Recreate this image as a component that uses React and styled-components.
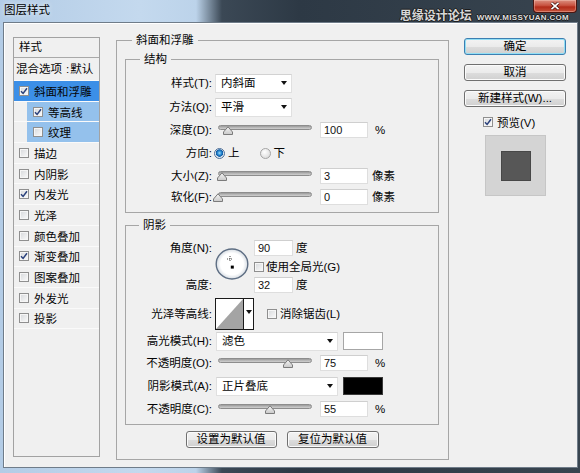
import React from "react";
import styled, { createGlobalStyle } from "styled-components";

const FONT = `"Liberation Sans", "Noto Sans CJK SC", sans-serif`;

const GlobalStyle = createGlobalStyle`
  * { box-sizing: border-box; }
  html, body { margin: 0; padding: 0; }
  body {
    width: 580px; height: 473px; overflow: hidden; background: #2f3b47;
    font-family: ${FONT}; font-size: 11.5px; color: #050505;
  }
`;

/* ---------- window frame ---------- */
const Window = styled.div`
  width: 580px; height: 473px; display: flex; flex-direction: column;
  background: linear-gradient(to right, #b3cce6 0px, #c4d9ee 140px, #bcd3ea 196px, #3b4855 222px, #2d3945 300px, #38444f 100%);
`;
const TitleBar = styled.div`
  height: 22px; flex-shrink: 0; display: flex; align-items: flex-start; padding-left: 4px;
`;
const Title = styled.div`
  line-height: 21px; font-size: 11.5px; color: #000;
  text-shadow: 0 0 5px rgba(255,255,255,.9);
`;
const TitleRight = styled.div`
  margin-left: auto; display: flex; flex-direction: column; align-items: flex-end;
`;
const CloseButton = styled.div`
  width: 44px; height: 13px; margin-right: 3px;
  border: 1px solid #4b1610; border-top: 0; border-radius: 0 0 4px 4px;
  background: linear-gradient(#dc8f80, #c85341 45%, #b22c1a 58%, #c8533b);
  box-shadow: inset 0 0 0 1px rgba(255,220,210,.35);
  display: flex; align-items: center; justify-content: center;
`;
const Watermark = styled.div`
  margin: -4px 11px 0 0; display: flex; align-items: baseline; gap: 5px; line-height: 14px;
`;
const outline = `-1px 0 #1c1c1c, 1px 0 #1c1c1c, 0 -1px #1c1c1c, 0 1px #1c1c1c`;
const WmCn = styled.span`
  font-size: 12px; font-weight: 700; color: #d8d8d8; text-shadow: ${outline};
`;
const WmEn = styled.span`
  font-size: 8px; font-weight: 700; color: #dcdcdc; letter-spacing: .3px; text-shadow: ${outline};
`;
const Client = styled.div`
  flex: 1; margin: 0 2px 5px 3px; background: #f0f0f0;
  border: 1px solid #6f7c89; box-shadow: inset 1px 1px 0 #fff;
  display: flex; align-items: flex-start; padding: 10px 0 0 9px;
`;

/* ---------- left list ---------- */
const StyleList = styled.div`
  width: 87px; height: 420px; margin-top: 4px; flex-shrink: 0;
  border: 1px solid #a2a2a2; background: #f0f0f0;
`;
const ListHeader = styled.div`
  height: 20px; line-height: 19px; padding-left: 5px; border-bottom: 1px solid #a9a9a9;
`;
const BlendRow = styled.div`
  height: 23px; line-height: 22px; padding-left: 2px; border-bottom: 1px solid #fafafa;
  white-space: nowrap;
`;
const Colon = styled.span`
  margin: 0 1px 0 4px;
`;
const ListRow = styled.div`
  height: 20.7px; display: flex; border-bottom: 1px solid #fafafa;
  padding-left: ${p => (p.$sub ? 13 : 0)}px;
`;
const ListCell = styled.div`
  flex: 1; display: flex; align-items: center; gap: 5px;
  padding-left: ${p => (p.$sub ? 6 : 5)}px;
  background: ${p => (p.$sel === "main" ? "#3c8fe7" : p.$sel === "sub" ? "#94c1ec" : "transparent")};
  white-space: nowrap;
`;

/* ---------- controls ---------- */
const CheckBox = styled.span`
  width: 10px; height: 10px; flex-shrink: 0; display: inline-flex; align-items: center; justify-content: center;
  border: 1px solid #8f8f8f; background: linear-gradient(135deg, #d6d8db, #fbfbfb);
  box-shadow: inset 0 0 0 1px #f6f6f6;
`;
function Check({ checked }) {
  return (
    <CheckBox>
      {checked && (
        <svg width="8" height="8" viewBox="0 0 8 8">
          <path d="M1 4.2 L3.1 6.4 L7 1.2" stroke="#2a417c" strokeWidth="1.5" fill="none" />
        </svg>
      )}
    </CheckBox>
  );
}
const CheckLabel = styled.label`
  display: flex; align-items: center; gap: ${p => p.$gap ?? 2}px;
  margin-left: ${p => p.$ml ?? 0}px; white-space: nowrap;
`;
const RadioDot = styled.span`
  width: 11px; height: 11px; border-radius: 50%; flex-shrink: 0;
  border: 1px solid ${p => (p.$on ? "#4f6f97" : "#a4a4a4")};
  background: ${p =>
    p.$on
      ? "radial-gradient(circle at 50% 45%, #9fdcf8 0, #2a8ad3 2px, #0e5aa3 3.4px, #dce6ef 4px, #f6f8fa 100%)"
      : "radial-gradient(circle at 40% 35%, #ffffff, #d3d3d3)"};
`;
const RadioOption = styled.label`
  display: flex; align-items: center; gap: 3px; margin-left: ${p => p.$ml}px;
`;

const Caret = () => (
  <svg width="6" height="4" viewBox="0 0 6 4">
    <path d="M0 0H6L3 4Z" fill="#111" />
  </svg>
);
const Select = styled.div`
  width: ${p => p.$w}px; height: 19px; margin-left: ${p => p.$ml}px; flex-shrink: 0;
  background: #fff; border: 1px solid #e0e0e0; border-top-color: #d2d2d2;
  display: flex; align-items: center; justify-content: space-between;
  padding: 0 4px 0 5px; line-height: 17px;
`;
const Field = styled.input`
  width: ${p => p.$w || 48}px; height: 16px; margin-left: ${p => p.$ml ?? 8}px; flex-shrink: 0;
  border: 1px solid #dedede; border-top-color: #cfcfcf; background: #fff;
  padding: 0 0 0 3px; font: 11px ${FONT}; color: #111; outline: none;
`;
const Unit = styled.span`
  margin-left: ${p => p.$ml ?? 6}px; white-space: nowrap;
`;
const Swatch = styled.div`
  width: 40px; height: 18px; margin-left: 5px; flex-shrink: 0;
  border: 1px solid ${p => (p.$color === "#000" ? "#3a3a3a" : "#a6a6a6")}; background: ${p => p.$color};
`;

const SliderWrap = styled.div`
  position: relative; width: 94px; height: 10px; margin-left: 6px; flex-shrink: 0;
`;
const Track = styled.div`
  height: 5px; border-radius: 3px; border: 1px solid #8d8d8d;
  background: linear-gradient(#9a9a9a, #bdbdbd 60%, #cfcfcf);
`;
const ThumbSvg = styled.svg`
  position: absolute; top: 1px;
`;
function Slider({ at }) {
  return (
    <SliderWrap>
      <Track />
      <ThumbSvg width="10" height="9" viewBox="0 0 10 9" style={{ left: at - 5 }}>
        <defs>
          <linearGradient id="tg" x1="0" y1="0" x2="0" y2="1">
            <stop offset="0" stopColor="#f6f6f6" />
            <stop offset="1" stopColor="#c9c9c9" />
          </linearGradient>
        </defs>
        <path d="M0.5 8.5 V6 L5 0.8 L9.5 6 V8.5 Z" fill="url(#tg)" stroke="#7b7b7b" strokeWidth="1" />
      </ThumbSvg>
    </SliderWrap>
  );
}

/* ---------- groups ---------- */
const Group = styled.fieldset`
  margin: ${p => p.$mt ?? 0}px 0 0 0; min-width: 0;
  border: 1px solid #a6a6a6;
  padding: ${p => p.$pad};
`;
const Legend = styled.legend`
  padding: 0 4px; margin-left: ${p => p.$ml}px; line-height: 14px; font-size: 11.5px;
`;
const MainGroup = styled(Group)`
  width: 333px; height: 427px; margin-left: 16px; flex-shrink: 0;
`;
const Row = styled.div`
  height: ${p => p.$h}px; margin-top: ${p => p.$mt ?? 0}px; display: flex; align-items: center; line-height: 14px;
`;
const Label = styled.span`
  width: 86px; flex-shrink: 0; text-align: right; white-space: nowrap;
`;

const AngleGrid = styled.div`
  display: grid; grid-template-columns: 86px 42px auto; grid-template-rows: 16px 21px 16px;
  line-height: 14px;
`;
const GridLabel = styled.span`
  grid-column: 1; grid-row: ${p => p.$row}; align-self: center; text-align: right; white-space: nowrap;
`;
const Dial = styled.svg`
  grid-column: 2; grid-row: 1 / span 3; align-self: start; margin: 8px 0 0 3px;
`;
const Cell = styled.div`
  grid-column: 3; grid-row: ${p => p.$row}; display: flex; align-items: center;
`;

const ContourSwatch = styled.div`
  width: 39px; height: 32px; margin-left: 3px; flex-shrink: 0;
  border: 1px solid #1a1a1a; display: flex; background: #fff;
`;
const ContourArrow = styled.div`
  flex: 1; border-left: 1px solid #1a1a1a; display: flex; align-items: center; justify-content: center;
  padding-bottom: 3px;
`;

const ButtonRow = styled.div`
  margin-top: 6px; display: flex; justify-content: center; gap: 10px;
`;
const Button = styled.button`
  width: ${p => p.$w}px; height: 17px; padding: 0; flex-shrink: 0;
  border: 1px solid ${p => (p.$default ? "#3c7fb1" : "#707070")}; border-radius: 3px;
  background: linear-gradient(#f3f3f3 0%, #ebebeb 50%, #dddddd 51%, #d0d0d0 100%);
  box-shadow: inset 0 0 0 1px ${p => (p.$default ? "#92dff5" : "#fbfbfb")};
  font: 11.5px ${FONT}; color: #000; line-height: 15px;
`;

/* ---------- right column ---------- */
const SideColumn = styled.div`
  width: 102px; margin: 5px 0 0 15px; display: flex; flex-direction: column; flex-shrink: 0;
  gap: 9px;
`;
const PreviewCheck = styled(CheckLabel)`
  margin: -1px 0 0 19px; height: 14px; gap: 4px;
`;
const PreviewBox = styled.div`
  width: 61px; height: 61px; margin: -3px 0 0 21px;
  background: #d4d4d4; border: 1px solid #c6c6c6;
  display: flex; align-items: center; justify-content: center;
`;
const PreviewSquare = styled.div`
  width: 30px; height: 30px; background: #575757; border: 1px solid #474747;
`;

const effects = [
  { label: "斜面和浮雕", checked: true, sel: "main" },
  { label: "等高线", checked: true, sel: "sub", sub: true },
  { label: "纹理", checked: false, sel: "sub", sub: true },
  { label: "描边" },
  { label: "内阴影" },
  { label: "内发光", checked: true },
  { label: "光泽" },
  { label: "颜色叠加" },
  { label: "渐变叠加", checked: true },
  { label: "图案叠加" },
  { label: "外发光" },
  { label: "投影" },
];

const TRACK_LEFT = 218;

export default function App() {
  return (
    <>
      <GlobalStyle />
      <Window>
        <TitleBar>
          <Title>图层样式</Title>
          <TitleRight>
            <CloseButton>
              <svg width="10" height="8" viewBox="0 0 10 8">
                <path d="M1.5 0.8 L8.5 7.2 M8.5 0.8 L1.5 7.2" stroke="#3a0d08" strokeWidth="3" />
                <path d="M1.5 0.8 L8.5 7.2 M8.5 0.8 L1.5 7.2" stroke="#fff" strokeWidth="1.7" />
              </svg>
            </CloseButton>
            <Watermark>
              <WmCn>思缘设计论坛</WmCn>
              <WmEn>WWW.MISSYUAN.COM</WmEn>
            </Watermark>
          </TitleRight>
        </TitleBar>

        <Client>
          <StyleList>
            <ListHeader>样式</ListHeader>
            <BlendRow>混合选项<Colon>:</Colon>默认</BlendRow>
            {effects.map(e => (
              <ListRow key={e.label} $sub={e.sub}>
                <ListCell $sub={e.sub} $sel={e.sel}>
                  <Check checked={e.checked} />
                  <span>{e.label}</span>
                </ListCell>
              </ListRow>
            ))}
          </StyleList>

          <MainGroup $pad="5px 9px 10px 8px">
            <Legend $ml={7}>斜面和浮雕</Legend>

            <Group $pad="5px 0 5px 0">
              <Legend $ml={14}>结构</Legend>
              <Row $h={24}>
                <Label>样式(T):</Label>
                <Select $w={77} $ml={3}>内斜面<Caret /></Select>
              </Row>
              <Row $h={24}>
                <Label>方法(Q):</Label>
                <Select $w={77} $ml={3}>平滑<Caret /></Select>
              </Row>
              <Row $h={22}>
                <Label>深度(D):</Label>
                <Slider at={227.5 - TRACK_LEFT} />
                <Field readOnly defaultValue="100" />
                <Unit $ml={7}>%</Unit>
              </Row>
              <Row $h={24}>
                <Label>方向:</Label>
                <RadioOption $ml={2}><RadioDot $on />上</RadioOption>
                <RadioOption $ml={20}><RadioDot />下</RadioOption>
              </Row>
              <Row $h={22}>
                <Label>大小(Z):</Label>
                <Slider at={221.5 - TRACK_LEFT} />
                <Field readOnly defaultValue="3" />
                <Unit $ml={4}>像素</Unit>
              </Row>
              <Row $h={20}>
                <Label>软化(F):</Label>
                <Slider at={218 - TRACK_LEFT} />
                <Field readOnly defaultValue="0" />
                <Unit $ml={4}>像素</Unit>
              </Row>
            </Group>

            <Group $mt={5} $pad="8px 0 4px 0">
              <Legend $ml={13}>阴影</Legend>
              <AngleGrid>
                <GridLabel $row={1}>角度(N):</GridLabel>
                <GridLabel $row={3}>高度:</GridLabel>
                <Dial width="34" height="32" viewBox="0 0 34 32">
                  <defs>
                    <radialGradient id="dg" cx="50%" cy="50%" r="50%">
                      <stop offset="0.72" stopColor="#ffffff" />
                      <stop offset="1" stopColor="#d5dbe2" />
                    </radialGradient>
                  </defs>
                  <ellipse cx="17" cy="16" rx="15.8" ry="15" fill="url(#dg)" stroke="#5e6e83" strokeWidth="1.4" />
                  <path d="M15 8 V14 M12 11 H18" stroke="#444" strokeWidth="1" strokeDasharray="1 1" />
                  <rect x="15.8" y="17.6" width="3" height="3" fill="#000" />
                </Dial>
                <Cell $row={1}>
                  <Field readOnly defaultValue="90" $w={39} $ml={0} />
                  <Unit $ml={3}>度</Unit>
                </Cell>
                <Cell $row={2}>
                  <CheckLabel $gap={2}><Check />使用全局光(G)</CheckLabel>
                </Cell>
                <Cell $row={3}>
                  <Field readOnly defaultValue="32" $w={39} $ml={0} />
                  <Unit $ml={3}>度</Unit>
                </Cell>
              </AngleGrid>

              <Row $h={33} $mt={4}>
                <Label>光泽等高线:</Label>
                <ContourSwatch>
                  <svg width="27" height="30" viewBox="0 0 27 30">
                    <rect width="27" height="30" fill="#fff" />
                    <path d="M0 30 L27 0 L27 30 Z" fill="#a4a4a4" />
                  </svg>
                  <ContourArrow><Caret /></ContourArrow>
                </ContourSwatch>
                <CheckLabel $ml={13} $gap={3}><Check />消除锯齿(L)</CheckLabel>
              </Row>
              <Row $h={22}>
                <Label>高光模式(H):</Label>
                <Select $w={122} $ml={4}>滤色<Caret /></Select>
                <Swatch $color="#fff" />
              </Row>
              <Row $h={22}>
                <Label>不透明度(O):</Label>
                <Slider at={287.5 - TRACK_LEFT} />
                <Field readOnly defaultValue="75" />
                <Unit $ml={7}>%</Unit>
              </Row>
              <Row $h={24}>
                <Label>阴影模式(A):</Label>
                <Select $w={122} $ml={4}>正片叠底<Caret /></Select>
                <Swatch $color="#000" />
              </Row>
              <Row $h={22}>
                <Label>不透明度(C):</Label>
                <Slider at={270 - TRACK_LEFT} />
                <Field readOnly defaultValue="55" />
                <Unit $ml={7}>%</Unit>
              </Row>
            </Group>

            <ButtonRow>
              <Button $w={91}>设置为默认值</Button>
              <Button $w={92}>复位为默认值</Button>
            </ButtonRow>
          </MainGroup>

          <SideColumn>
            <Button $w={102} $default>确定</Button>
            <Button $w={102}>取消</Button>
            <Button $w={102}>新建样式(W)...</Button>
            <PreviewCheck><Check checked />预览(V)</PreviewCheck>
            <PreviewBox><PreviewSquare /></PreviewBox>
          </SideColumn>
        </Client>
      </Window>
    </>
  );
}
